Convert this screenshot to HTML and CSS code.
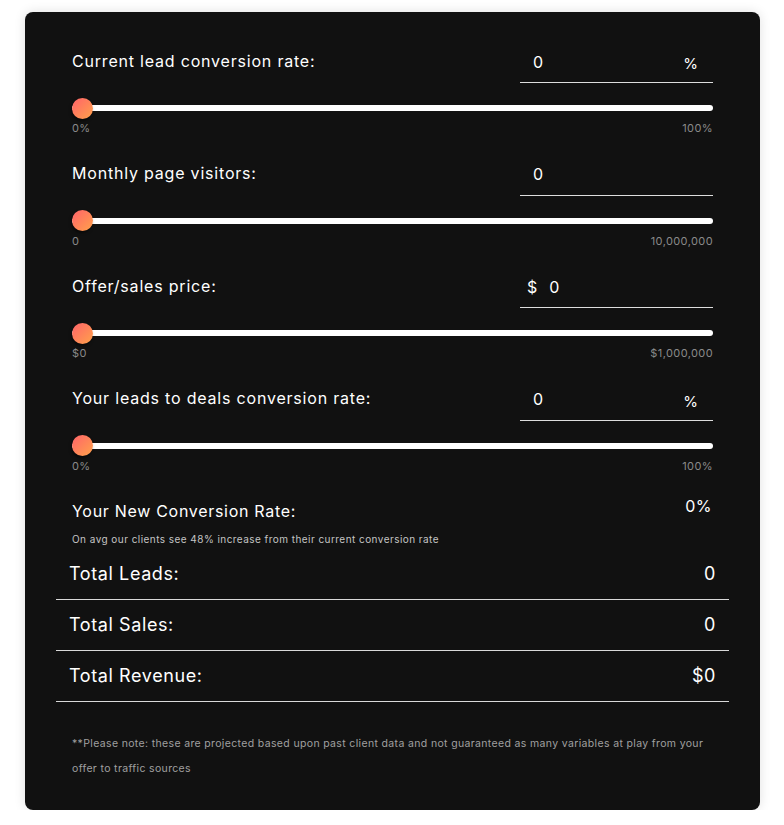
FILE: index.html
```html
<!DOCTYPE html>
<html lang="en">
<head>
    <meta charset="UTF-8">
    <meta name="viewport" content="width=device-width, initial-scale=1.0">
    <title>Conversion Calculator</title>
    <link rel="stylesheet" href="styles.css">
</head>
<body>
    <div class="calculator">
        <!-- Current lead conversion rate -->
        <div class="field">
            <div class="field-head">
                <label for="lead-rate">Current lead conversion rate:</label>
                <div class="value-box">
                    <input type="text" id="lead-rate" value="0">
                    <span class="unit">%</span>
                </div>
            </div>
            <input type="range" class="slider" min="0" max="100" value="0">
            <div class="range-labels"><span>0%</span><span>100%</span></div>
        </div>

        <!-- Monthly page visitors -->
        <div class="field">
            <div class="field-head">
                <label for="visitors">Monthly page visitors:</label>
                <div class="value-box">
                    <input type="text" id="visitors" value="0">
                </div>
            </div>
            <input type="range" class="slider" min="0" max="10000000" value="0">
            <div class="range-labels"><span>0</span><span>10,000,000</span></div>
        </div>

        <!-- Offer/sales price -->
        <div class="field">
            <div class="field-head">
                <label for="price">Offer/sales price:</label>
                <div class="value-box">
                    <span class="prefix">$</span>
                    <input type="text" id="price" class="with-prefix" value="0">
                </div>
            </div>
            <input type="range" class="slider" min="0" max="1000000" value="0">
            <div class="range-labels"><span>$0</span><span>$1,000,000</span></div>
        </div>

        <!-- Leads to deals conversion rate -->
        <div class="field">
            <div class="field-head">
                <label for="deal-rate">Your leads to deals conversion rate:</label>
                <div class="value-box">
                    <input type="text" id="deal-rate" value="0">
                    <span class="unit">%</span>
                </div>
            </div>
            <input type="range" class="slider" min="0" max="100" value="0">
            <div class="range-labels"><span>0%</span><span>100%</span></div>
        </div>

        <!-- New conversion rate -->
        <div class="new-rate">
            <div class="new-rate-head">
                <span class="new-rate-title">Your New Conversion Rate:</span>
                <span class="new-rate-value">0%</span>
            </div>
            <p class="new-rate-note">On avg our clients see 48% increase from their current conversion rate</p>
        </div>

        <!-- Results -->
        <div class="results">
            <div class="result-row"><span>Total Leads:</span><span>0</span></div>
            <div class="result-row"><span>Total Sales:</span><span>0</span></div>
            <div class="result-row"><span>Total Revenue:</span><span>$0</span></div>
        </div>

        <p class="disclaimer">**Please note: these are projected based upon past client data and not guaranteed as many variables at play from your offer to traffic sources</p>
    </div>
</body>
</html>
```

FILE: styles.css
```css
body {
    margin: 0;
    background-color: #fff;
    font-family: 'Inter', 'Noto Sans', Arial, sans-serif;
}

.calculator {
    width: 735px;
    margin: 12px 0 0 25px;
    padding: 27px 47px 29px;
    box-sizing: border-box;
    background: #111;
    border-radius: 8px;
    box-shadow: 0 0 12px rgba(0, 0, 0, 0.12);
    color: #fff;
}

.field {
    margin-bottom: 15.5px;
}

.field-head {
    display: flex;
    justify-content: space-between;
    align-items: center;
    height: 44px;
}

.field-head label {
    font-size: 16px;
    letter-spacing: 0.8px;
    margin-top: -1px;
}

.value-box {
    width: 193px;
    height: 44px;
    box-sizing: border-box;
    border-bottom: 1px solid #ddd;
    display: flex;
    align-items: center;
    padding: 2px 15px 0 13px;
}

.value-box input {
    flex: 1;
    min-width: 0;
    background: transparent;
    border: none;
    outline: none;
    color: #fff;
    font-family: inherit;
    font-size: 16px;
    padding: 0;
}

.value-box .unit {
    font-size: 15px;
    margin-top: 4px;
}

.value-box .prefix {
    font-size: 16px;
    margin: 0 12px 0 -6px;
}

.slider {
    -webkit-appearance: none;
    appearance: none;
    display: block;
    width: 100%;
    height: 20px;
    margin: 15px 0 0;
    background: transparent;
}

.slider::-webkit-slider-runnable-track {
    height: 6px;
    background: #fff;
    border-radius: 3px;
}

.slider::-webkit-slider-thumb {
    -webkit-appearance: none;
    width: 21px;
    height: 21px;
    margin-top: -7.5px;
    border-radius: 50%;
    background: linear-gradient(135deg, #ff636a, #ffa24a);
    box-shadow: -1px 2px 3px rgba(0, 0, 0, 0.5);
}

.range-labels {
    display: flex;
    justify-content: space-between;
    margin-top: 2px;
    font-size: 11px;
    line-height: 16px;
    letter-spacing: 0.4px;
    color: #8a8a8a;
}

.new-rate {
    padding-top: 6.5px;
}

.new-rate-head {
    display: flex;
    justify-content: space-between;
    align-items: flex-start;
}

.new-rate-title {
    font-size: 16px;
    line-height: 30px;
    letter-spacing: 0.7px;
}

.new-rate-value {
    font-size: 16px;
    line-height: 20px;
    letter-spacing: 0.5px;
    margin-right: 1px;
}

.new-rate-note {
    margin: 5px 0 0;
    font-size: 10px;
    line-height: 16px;
    letter-spacing: 0.45px;
    color: #c4c4c4;
}

.results {
    margin: 2px -16px 0;
}

.result-row {
    display: flex;
    justify-content: space-between;
    height: 51px;
    box-sizing: border-box;
    padding: 0 13px;
    align-items: center;
    border-bottom: 1px solid #d9d9d9;
    font-size: 18px;
    letter-spacing: 0.6px;
}

.disclaimer {
    margin: 29px 0 0;
    font-size: 10.5px;
    line-height: 25px;
    letter-spacing: 0.35px;
    color: #a0a0a0;
}
```
